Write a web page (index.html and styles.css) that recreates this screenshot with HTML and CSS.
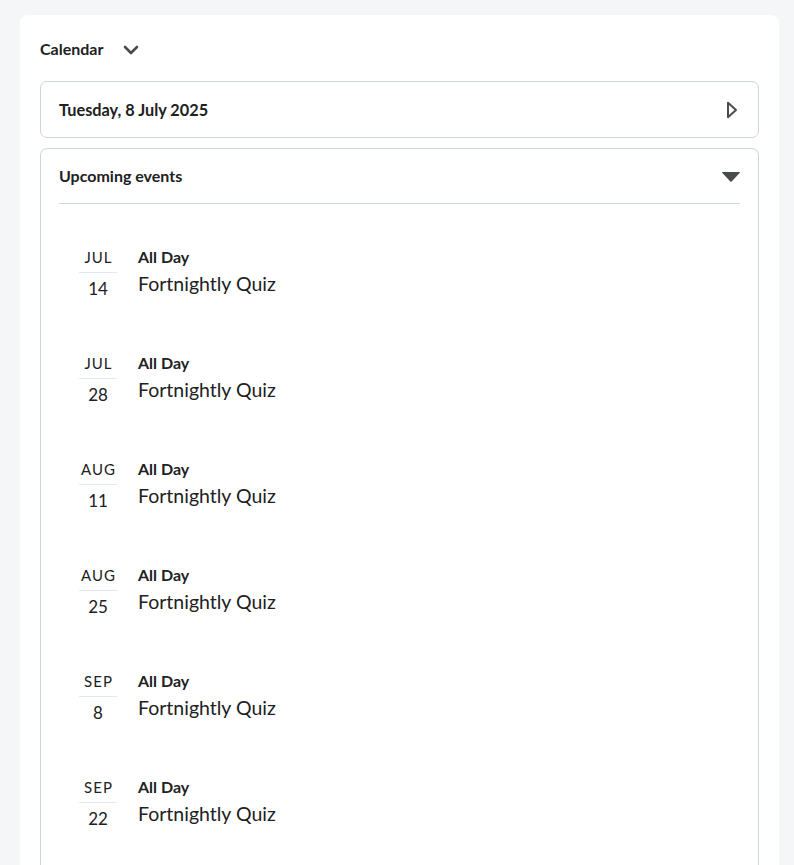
FILE: index.html
```html
<!DOCTYPE html>
<html>
<head>
<meta charset="utf-8">
<link rel="stylesheet" href="styles.css">
</head>
<body>
<div class="card">
  <div class="title-row">
    <span class="title">Calendar</span>
    <svg class="chev" width="16" height="10" viewBox="0 0 16 10"><path d="M2 2 L8 8 L14 2" fill="none" stroke="#494c4e" stroke-width="2.6" stroke-linecap="round" stroke-linejoin="round"/></svg>
  </div>
  <div class="datebox">
    <span class="date">Tuesday, 8 July 2025</span>
    <svg width="12" height="18" viewBox="0 0 12 18"><path d="M2 1.8 L10 9 L2 16.2 Z" fill="none" stroke="#494c4e" stroke-width="2" stroke-linejoin="round"/></svg>
  </div>
  <div class="upcoming">
    <div class="up-head">
      <span class="up-title">Upcoming events</span>
      <svg width="20" height="12" viewBox="0 0 20 12"><path d="M1.5 1 L18.5 1 Q19.5 1 18.8 1.8 L10.7 10.5 Q10 11.2 9.3 10.5 L1.2 1.8 Q0.5 1 1.5 1 Z" fill="#494c4e"/></svg>
    </div>
    <div class="events">
      <div class="event"><div class="d"><div class="m">JUL</div><div class="n">14</div></div><div class="t"><div class="ad">All Day</div><div class="q">Fortnightly Quiz</div></div></div>
      <div class="event"><div class="d"><div class="m">JUL</div><div class="n">28</div></div><div class="t"><div class="ad">All Day</div><div class="q">Fortnightly Quiz</div></div></div>
      <div class="event"><div class="d"><div class="m">AUG</div><div class="n">11</div></div><div class="t"><div class="ad">All Day</div><div class="q">Fortnightly Quiz</div></div></div>
      <div class="event"><div class="d"><div class="m">AUG</div><div class="n">25</div></div><div class="t"><div class="ad">All Day</div><div class="q">Fortnightly Quiz</div></div></div>
      <div class="event"><div class="d"><div class="m">SEP</div><div class="n">8</div></div><div class="t"><div class="ad">All Day</div><div class="q">Fortnightly Quiz</div></div></div>
      <div class="event"><div class="d"><div class="m">SEP</div><div class="n">22</div></div><div class="t"><div class="ad">All Day</div><div class="q">Fortnightly Quiz</div></div></div>
    </div>
  </div>
</div>
</body>
</html>
```
FILE: styles.css
```css
html, body {
  margin: 0;
  padding: 0;
  background: #f5f6f8;
  height: 865px;
  overflow: hidden;
}
body {
  padding: 15px 15px 0 20px;
  font-family: Lato, "Noto Sans", sans-serif;
  color: #202122;
}
.card {
  background: #fff;
  border-radius: 8px 8px 0 0;
  padding: 18px 20px 0 20px;
  height: 900px;
}
.title-row {
  display: flex;
  align-items: center;
  height: 32px;
  margin-bottom: 16px;
}
.title {
  font-size: 16px;
  font-weight: 700;
  margin-top: -1px;
}
.chev {
  margin-left: 20px;
  margin-top: 1px;
}
.datebox {
  border: 1px solid #cdd5dc;
  border-radius: 7px;
  height: 55px;
  display: flex;
  align-items: center;
  justify-content: space-between;
  padding: 0 20px 0 18px;
}
.date {
  font-size: 16.3px;
  font-weight: 700;
  margin-top: -1px;
}
.upcoming {
  margin-top: 10px;
  border: 1px solid #cdd5dc;
  border-bottom: none;
  border-radius: 7px 7px 0 0;
  padding: 0 18px;
  height: 800px;
}
.up-head {
  height: 55px;
  border-bottom: 1px solid #cdd5dc;
  display: flex;
  align-items: center;
  justify-content: space-between;
  padding-bottom: 2px;
  box-sizing: border-box;
}
.up-head svg {
  margin-right: -1px;
  margin-top: 4px;
}
.up-title {
  font-size: 16px;
  font-weight: 700;
}
.events {
  padding-top: 43px;
  padding-left: 20px;
}
.event {
  display: flex;
  height: 106px;
}
.d {
  width: 38px;
  text-align: center;
}
.m {
  font-size: 15px;
  letter-spacing: 1px;
  text-indent: 1px;
  line-height: 20px;
  padding-bottom: 5px;
  border-bottom: 1px solid #e3e9f1;
}
.n {
  font-size: 17px;
  line-height: 24px;
  padding-top: 4px;
}
.t {
  margin-left: 21px;
}
.ad {
  font-size: 16px;
  font-weight: 700;
  line-height: 20px;
}
.q {
  font-size: 19.5px;
  line-height: 24px;
  margin-top: 5px;
}
```
